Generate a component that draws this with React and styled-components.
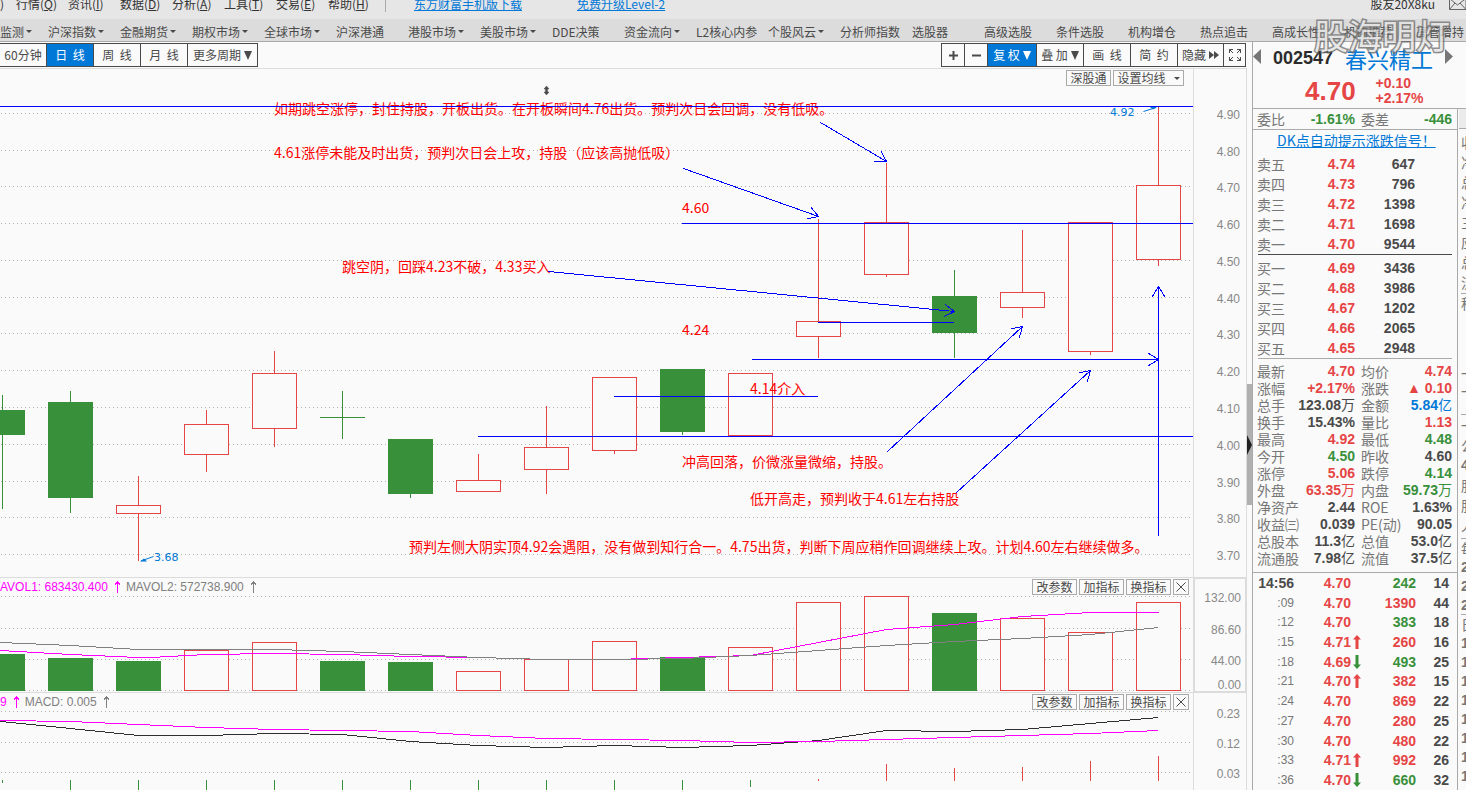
import React from "react";
import styled, { createGlobalStyle } from "styled-components";

const CJK = '"Noto Sans CJK SC", sans-serif';
const NUM = '"Liberation Sans", "Noto Sans CJK SC", sans-serif';
const C = {
  bg: "#fafafa",
  red: "#e64545",
  green: "#38903a",
  blue: "#0078d7",
  dark: "#4a4a4a",
  label: "#777777",
  grid: "#dcdcdc",
  line: "#aaaaaa",
  draw: "#0000ff",
  note: "#ff0000",
  magenta: "#ff00ff",
};

const Global = createGlobalStyle`
  *, *::before, *::after { box-sizing: border-box; }
  body { margin: 0; background: ${C.bg}; overflow: hidden; }
  button { margin: 0; padding: 0; border: 0; background: none; color: inherit; font: inherit; white-space: nowrap; }
`;

const Page = styled.div`
  display: flex;
  flex-direction: column;
  height: 100vh;
  overflow: hidden;
  font: 12px/16px ${CJK};
  color: ${C.dark};
`;

/* ---------- top bars ---------- */
const MenuBar = styled.header`
  display: flex;
  align-items: flex-end;
  flex: none;
  height: 19px;
  padding-bottom: 7px;
  overflow: hidden;
  background: #e6e6e6;
  color: #333;
  white-space: nowrap;
`;
const MenuStub = styled.span`
  width: 16px;
`;
const MenuItem = styled.button`
  width: 52px;
  text-align: left;
`;
const MenuDivider = styled.span`
  width: 1px;
  height: 14px;
  margin: 0 28px 0 5px;
  background: ${C.line};
`;
const TopLink = styled.a`
  width: 163px;
  color: ${C.blue};
`;
const User = styled.div`
  display: flex;
  align-items: center;
  gap: 14px;
  margin-left: auto;
`;
const NavBar = styled.nav`
  display: flex;
  align-items: center;
  flex: none;
  height: 23px;
  padding-top: 3px;
  overflow: hidden;
  background: #dcdcdc;
  border-bottom: 1px solid ${C.line};
`;
const NavItem = styled.button`
  display: flex;
  align-items: center;
  flex: none;
  gap: 2px;
  width: ${(p) => (p.$first ? 48 : 72)}px;
`;
const Caret = styled.span`
  border: 3px solid transparent;
  border-top-color: currentColor;
  border-bottom: 0;
`;

/* ---------- layout ---------- */
const Body = styled.main`
  display: flex;
  flex: 1;
  min-height: 0;
`;
const ChartColumn = styled.section`
  display: flex;
  flex-direction: column;
  flex: 1;
  min-width: 0;
`;
const Toolbar = styled.div`
  display: flex;
  justify-content: space-between;
  flex: none;
  height: 27px;
  padding: 1px 1px 0 0;
  border-bottom: 1px solid ${C.grid};
`;
const Group = styled.div`
  display: flex;
  height: 24px;
  border: 1px solid ${C.dark};
  border-left-width: ${(p) => (p.$open ? 0 : 1)}px;
`;
const Tool = styled.button`
  display: flex;
  align-items: center;
  justify-content: center;
  gap: 3px;
  width: ${(p) => p.$w}px;
  border-left: ${(p) => (p.$edge ? 0 : 1)}px solid ${C.dark};
  background: ${(p) => (p.$on ? C.blue : C.bg)};
  color: ${(p) => (p.$on ? "#fff" : C.dark)};
`;
const Panel = styled.div`
  display: flex;
  position: relative;
  flex: ${(p) => (p.$grow ? "1 1 0" : "none")};
  height: ${(p) => p.$h}px;
  overflow: hidden;
  border-top: ${(p) => (p.$line ? 1 : 0)}px solid ${C.grid};
`;
const Plot = styled.div`
  display: flex;
  justify-content: flex-end;
  flex: 1;
  min-width: 0;
  overflow: hidden;
  svg { flex: none; display: block; }
`;
const Axis = styled.div`
  flex: none;
  width: 54px;
  border: solid ${C.grid};
  border-width: ${(p) => (p.$boxed ? "1px 2px 1px 2px" : "0 1px")};
  overflow: hidden;
  svg { display: block; }
`;
const Tags = styled.div`
  position: absolute;
  top: 1px;
  right: ${(p) => p.$right}px;
  display: flex;
  gap: 2px;
`;
const Tag = styled.button`
  display: flex;
  align-items: center;
  justify-content: center;
  gap: 8px;
  width: ${(p) => p.$w}px;
  height: 16px;
  border: 1px solid ${C.line};
  background: ${C.bg};
  line-height: 14px;
`;
const Legend = styled.div`
  position: absolute;
  top: 1px;
  left: 0;
  display: flex;
  align-items: center;
  font: 12px/16px ${NUM};
  gap: 5px;
`;
const LegendItem = styled.span`
  display: flex;
  align-items: center;
  gap: 6px;
  color: ${(p) => p.$c};
`;
const Splitter = styled.div`
  display: flex;
  align-items: center;
  flex: none;
  width: 5px;
  margin: 342px 0 0;
  height: 121px;
  background: #b0b0b0;
  overflow: hidden;
`;

/* ---------- quote panel ---------- */
const Quote = styled.aside`
  display: flex;
  flex-direction: column;
  flex: none;
  width: 205px;
  border-left: 1px solid ${C.line};
`;
const NameRow = styled.div`
  display: flex;
  align-items: center;
  justify-content: space-between;
  flex: none;
  height: 32px;
  padding: 0 4px 0 0;
`;
const Code = styled.strong`
  font: bold 18px/24px ${NUM};
  color: #2b2b2b;
`;
const StockName = styled.span`
  font-size: 22px;
  line-height: 30px;
  color: ${C.blue};
`;
const PriceRow = styled.div`
  display: flex;
  align-items: center;
  gap: 20px;
  flex: none;
  height: 35px;
  padding-left: 52px;
  border-bottom: 1px solid ${C.line};
  font-family: ${NUM};
  font-weight: bold;
  color: ${C.red};
`;
const Last = styled.span`
  font-size: 26px;
  line-height: 32px;
`;
const Change = styled.span`
  font-size: 14px;
  line-height: 15px;
`;
const Promo = styled.a`
  flex: none;
  height: 24px;
  padding-left: 24px;
  font-size: 14px;
  line-height: 21px;
  color: ${C.blue};
  white-space: nowrap;
`;
const Table = styled.table`
  width: 204px;
  table-layout: fixed;
  border-collapse: collapse;
  font: 14px/16px ${NUM};
  white-space: nowrap;
  height: ${(p) => (p.$fill ? "100%" : "auto")};
  tr { height: ${(p) => (p.$fill ? "auto" : p.$row + "px")}; }
  th, td { padding: 0; }
`;
const Name = styled.th`
  padding-left: ${(p) => p.$pad}px !important;
  font: 14px/16px ${CJK};
  text-align: left;
  color: ${C.label};
`;
const Value = styled.td`
  text-align: right;
  font-weight: bold;
  color: ${(p) => p.$c || C.dark};
`;
const Unit = styled.span`
  font-weight: normal;
`;
const Time = styled.th`
  text-align: right;
  font: ${(p) => (p.$full ? "bold 14px/16px" : "12px/16px")} ${NUM};
  color: ${(p) => (p.$full ? C.dark : C.label)};
`;
const Rule = styled.hr`
  flex: none;
  width: 194px;
  height: 1px;
  margin: 0 5px 3px;
  border: 0;
  background: ${(p) => p.$c};
`;
const Boxed = styled.div`
  flex: none;
  padding-bottom: ${(p) => p.$pb || 0}px;
  border-bottom: 1px solid ${C.line};
`;
const Ticks = styled.div`
  flex: 1;
  min-height: 0;
`;

/* ---------- clipped neighbour panel ---------- */
const Side = styled.aside`
  flex: none;
  width: 9px;
  margin-top: 66px;
  overflow: hidden;
  border-left: 1px solid ${C.line};
  border-top: 1px solid ${C.line};
  font: 14px/20px ${CJK};
  color: ${C.label};
  white-space: nowrap;
`;
const SideHead = styled.div`
  height: 20px;
  margin: 0 0 3px 1px;
  background: #ebebeb;
  border-bottom: 1px solid ${C.line};
`;
const SideBlock = styled.div`
  height: ${(p) => p.$h}px;
  margin-left: 3px;
  line-height: ${(p) => p.$lh}px;
  border-bottom: 1px solid ${C.line};
`;
const SideText = styled.div`
  padding-top: ${(p) => p.$gap || 0}px;
  font-weight: ${(p) => (p.$b ? "bold" : "normal")};
  font-family: ${(p) => (p.$b ? NUM : CJK)};
`;

const Watermark = styled.div`
  position: absolute;
  top: 14px;
  right: 16px;
  font: 34px/42px ${CJK};
  color: #e4e4e4;
  -webkit-text-stroke: 3px #707070;
  paint-order: stroke fill;
  opacity: 0.75;
  text-shadow: 1px 1px 2px rgba(0, 0, 0, 0.2);
  pointer-events: none;
`;

/* ---------- data ---------- */
const MENU = [["行情", "Q"], ["资讯", "I"], ["数据", "D"], ["分析", "A"], ["工具", "T"], ["交易", "E"], ["帮助", "H"]];
const NAV = [
  ["监测", 1], ["沪深指数", 1], ["金融期货", 1], ["期权市场", 1], ["全球市场", 1], ["沪深港通", 0],
  ["港股市场", 1], ["美股市场", 1], ["DDE决策", 0], ["资金流向", 1], ["L2核心内参", 0], ["个股风云", 1],
  ["分析师指数", 0], ["选股器", 0], ["高级选股", 0], ["条件选股", 0], ["机构增仓", 0], ["热点追击", 0],
  ["高成长性", 0], ["机构推荐", 0], ["高管增持", 0],
];
/* centre, body top, body bottom, wick top, wick bottom, up?, volume top */
const CANDLES = [
  [2, 410, 435, 395, 509, 0, 654], [70, 402, 498, 391, 513, 0, 658], [138, 505, 514, 476, 561, 1, 661, 0],
  [206, 424, 455, 410, 472, 1, 650], [274, 373, 429, 351, 447, 1, 642], [342, 417, 418, 391, 439, 0, 661],
  [410, 439, 494, 439, 498, 0, 662], [478, 480, 492, 454, 492, 1, 671], [546, 447, 470, 406, 494, 1, 659],
  [614, 377, 451, 377, 454, 1, 641], [682, 369, 432, 369, 435, 0, 657], [750, 373, 436, 373, 436, 1, 647],
  [818, 321, 337, 219, 358, 1, 602], [886, 222, 275, 163, 277, 1, 596], [954, 296, 333, 270, 358, 0, 613],
  [1022, 292, 308, 230, 318, 1, 618], [1090, 222, 352, 222, 355, 1, 632], [1158, 185, 260, 107, 266, 1, 602],
];
const PRICE_GRID = [113, 150, 186, 223, 260, 297, 333, 370, 407, 444, 481, 517, 554];
const NOTES = [
  [274, 114, "如期跳空涨停，封住持股，开板出货。在开板瞬间4.76出货。预判次日会回调，没有低吸。"],
  [274, 158, "4.61涨停未能及时出货，预判次日会上攻，持股（应该高抛低吸）"],
  [682, 213, "4.60"],
  [342, 272, "跳空阴，回踩4.23不破，4.33买入"],
  [682, 335, "4.24"],
  [750, 394, "4.14介入"],
  [682, 467, "冲高回落，价微涨量微缩，持股。"],
  [750, 504, "低开高走，预判收于4.61左右持股"],
  [409, 552, "预判左侧大阴实顶4.92会遇阻，没有做到知行合一。4.75出货，判断下周应稍作回调继续上攻。计划4.60左右继续做多。"],
];
const LEVELS = [[0, 1193, 106], [682, 1193, 223], [818, 954, 322], [614, 818, 396], [478, 1193, 436]];
const ARROWS = [
  [820, 122, 886, 161], [683, 168, 818, 216], [548, 271, 954, 311], [751, 359, 1158, 359],
  [887, 451, 1022, 326], [956, 492, 1090, 370], [1158, 535, 1158, 286],
];
const MA1 = "0,650 70,654 138,657 150,657 206,654 274,653 342,654 410,656 478,657 546,659 614,659 682,657 750,655 818,642 886,629 954,624 1022,616 1090,612 1158,612";
const MA2 = "0,642 70,645 138,649 274,649 342,651 410,654 478,657 546,659 614,659 682,658 750,655 818,650 886,645 954,641 1022,638 1090,634 1158,627";
const DIF = "0,721 70,728 138,735 206,735 274,733 342,734 410,741 478,745 546,747 614,745 682,747 750,745 818,740 886,730 954,731 1022,729 1090,723 1158,717";
const DEA = "0,720 70,721 138,724 206,727 274,729 342,730 410,731 478,735 546,738 614,739 682,740 750,742 818,741 886,739 954,737 1022,735 1090,733 1158,730";
const STICKS = [
  [2, 780, 783, 0], ...[70, 138, 206, 274, 342, 410, 478, 546, 614, 682].map((x) => [x, 780, 792, 0]),
  [750, 780, 787, 0], [818, 779, 781, 1], [886, 764, 781, 1], [954, 768, 781, 1], [1022, 767, 781, 1],
  [1090, 761, 781, 1], [1158, 756, 781, 1],
];
const ASKS = [["卖五", "4.74", "647"], ["卖四", "4.73", "796"], ["卖三", "4.72", "1398"], ["卖二", "4.71", "1698"], ["卖一", "4.70", "9544"]];
const BIDS = [["买一", "4.69", "3436"], ["买二", "4.68", "3986"], ["买三", "4.67", "1202"], ["买四", "4.66", "2065"], ["买五", "4.65", "2948"]];
const R = C.red, G = C.green, K = C.dark;
const DETAILS = [
  ["最新", "4.70", R, "均价", "4.74", R], ["涨幅", "+2.17%", R, "涨跌", "▲ 0.10", R],
  ["总手", "123.08万", K, "金额", "5.84亿", C.blue], ["换手", "15.43%", K, "量比", "1.13", R],
  ["最高", "4.92", R, "最低", "4.48", G], ["今开", "4.50", G, "昨收", "4.60", K],
  ["涨停", "5.06", R, "跌停", "4.14", G], ["外盘", "63.35万", R, "内盘", "59.73万", G],
  ["净资产", "2.44", K, "ROE", "1.63%", K], ["收益㈢", "0.039", K, "PE(动)", "90.05", K],
  ["总股本", "11.3亿", K, "总值", "53.0亿", K], ["流通股", "7.98亿", K, "流值", "37.5亿", K],
];
const TICKS = [
  ["14:56", "4.70", 0, "242", G, "14"], [":09", "4.70", 0, "1390", R, "44"], [":12", "4.70", 0, "383", G, "18"],
  [":15", "4.71", 1, "260", R, "16"], [":18", "4.69", -1, "493", G, "25"], [":21", "4.70", 1, "382", R, "15"],
  [":24", "4.70", 0, "869", R, "22"], [":27", "4.70", 0, "280", R, "25"], [":30", "4.70", 0, "480", R, "22"],
  [":33", "4.71", 1, "992", R, "26"], [":36", "4.70", -1, "660", G, "32"],
];

/* ---------- drawing parts ---------- */
const Grid = ({ rows }) => rows.map((y) => (
  <line key={y} x1="1" x2="1193" y1={y + 0.5} y2={y + 0.5} stroke="#b4b4b4" strokeDasharray="1 3" shapeRendering="crispEdges" />
));
const Bar = ({ x, top, bottom, up }) => up
  ? <rect x={x - 21.5} y={top + 0.5} width="44" height={bottom - top - 1} fill={C.bg} stroke={C.red} />
  : <rect x={x - 22} y={top} width="45" height={bottom - top} fill={C.green} />;

function Arrow({ x1, y1, x2, y2 }) {
  const a = Math.atan2(y2 - y1, x2 - x1);
  const tip = (s) => `${x2 - 12 * Math.cos(a + s)},${y2 - 12 * Math.sin(a + s)}`;
  return (
    <g transform="translate(.5 .5)" fill="none" stroke={C.draw} shapeRendering="crispEdges">
      <line x1={x1} y1={y1} x2={x2} y2={y2} />
      <polyline points={`${tip(0.55)} ${x2},${y2} ${tip(-0.55)}`} />
    </g>
  );
}
const Trace = ({ points, color }) => (
  <polyline points={points} transform="translate(.5 .5)" fill="none" stroke={color} shapeRendering="crispEdges" />
);
const AxisLabels = ({ top, height, labels }) => (
  <svg width="50" height={height} viewBox={`0 ${top} 50 ${height}`} fontFamily="Liberation Sans, sans-serif" fontSize="12" fill="#888" textAnchor="end">
    {labels.map(([y, t]) => <text key={t} x="46" y={y + 5}>{t}</text>)}
  </svg>
);
const UpArrow = () => (
  <svg width="7" height="12" viewBox="0 0 7 12" fill="none" stroke="currentColor" shapeRendering="crispEdges" aria-hidden="true">
    <path d="M3.5 0V12M.5 4.5 3.5 .5 6.5 4.5" />
  </svg>
);
const TickIcon = styled.svg`
  display: block;
  margin-left: 2px;
`;
const TickArrow = ({ dir }) => (
  <TickIcon width="8" height="14" viewBox="0 0 8 14" fill={dir > 0 ? C.red : C.green} aria-hidden="true">
    <path d={dir > 0 ? "M4 0 8 4.500H5.500V14H2.500V4.500H0Z" : "M4 14 8 9.500H5.500V0H2.500V9.500H0Z"} />
  </TickIcon>
);
const Down = () => (
  <svg width="8" height="9" viewBox="0 0 8 9" fill="currentColor" aria-hidden="true"><path d="M0 0H8L4 9Z" /></svg>
);
const Cross = () => (
  <svg width="10" height="10" viewBox="0 0 10 10" fill="none" stroke="currentColor" aria-hidden="true"><path d="M.5 .5 9.5 9.5M9.5 .5 .5 9.5" /></svg>
);
const SideArrow = ({ right }) => (
  <svg width="8" height="15" viewBox="0 0 8 15" fill="#777" aria-hidden="true"><path d={right ? "M0 0V15L8 7.5Z" : "M8 0V15L0 7.5Z"} /></svg>
);

const IndicatorTags = () => (
  <Tags $right={58}>
    <Tag $w={45}>改参数</Tag>
    <Tag $w={45}>加指标</Tag>
    <Tag $w={45}>换指标</Tag>
    <Tag $w={16} aria-label="关闭"><Cross /></Tag>
  </Tags>
);

const Amount = ({ text }) => {
  const unit = /[万亿]$/.test(text) ? text.slice(-1) : "";
  return <>{unit ? text.slice(0, -1) : text}{unit && <Unit>{unit}</Unit>}</>;
};
const PairTable = ({ rows, row }) => (
  <Table $row={row}>
    <colgroup><col width="41" /><col width="61" /><col width="43" /><col width="54" /><col width="5" /></colgroup>
    <tbody>
      {rows.map(([a, av, ac, b, bv, bc]) => (
        <tr key={a}>
          <Name scope="row" $pad={4}>{a}</Name><Value $c={ac}><Amount text={av} /></Value>
          <Name scope="row" $pad={6}>{b}</Name><Value $c={bc}><Amount text={bv} /></Value><td />
        </tr>
      ))}
    </tbody>
  </Table>
);
const DepthTable = ({ rows }) => (
  <Table $row={20}>
    <colgroup><col width="46" /><col width="56" /><col width="60" /><col width="42" /></colgroup>
    <tbody>
      {rows.map(([n, p, v]) => (
        <tr key={n}><Name scope="row" $pad={4}>{n}</Name><Value $c={C.red}>{p}</Value><Value>{v}</Value><td /></tr>
      ))}
    </tbody>
  </Table>
);

export default function App() {
  return (
    <Page>
      <Global />
      <MenuBar>
        <MenuStub>)</MenuStub>
        {MENU.map(([t, k]) => <MenuItem key={k}>{t}(<u>{k}</u>)</MenuItem>)}
        <MenuDivider />
        <TopLink href="#mobile">东方财富手机版下载</TopLink>
        <TopLink href="#level2">免费升级Level-2</TopLink>
        <User>
          <span>股友20X8ku</span>
          <svg width="17" height="12" viewBox="0 0 17 12" fill="none" stroke="#666" aria-hidden="true">
            <path d="M.5 .5H17V11.5H.5ZM.5 .5 8.5 7 17 .5M.5 11.5 6 5M17 11.5 11 5" />
          </svg>
        </User>
      </MenuBar>
      <NavBar>
        {NAV.map(([t, c], i) => <NavItem key={t} $first={i === 0}>{t}{c ? <Caret /> : null}</NavItem>)}
      </NavBar>
      <Body>
        <ChartColumn>
          <Toolbar>
            <Group $open>
              <Tool $w={46} $edge>60分钟</Tool>
              <Tool $w={47} $on>日&nbsp; 线</Tool>
              <Tool $w={47}>周&nbsp; 线</Tool>
              <Tool $w={47}>月&nbsp; 线</Tool>
              <Tool $w={70}>更多周期<Down /></Tool>
            </Group>
            <Group>
              <Tool $w={22} $edge aria-label="放大">
                <svg width="9" height="9" viewBox="0 0 9 9" stroke={C.dark} strokeWidth="2" aria-hidden="true"><path d="M4.5 0V9M0 4.5H9" /></svg>
              </Tool>
              <Tool $w={23} aria-label="缩小">
                <svg width="9" height="9" viewBox="0 0 9 9" stroke={C.dark} strokeWidth="2" aria-hidden="true"><path d="M0 4.5H9" /></svg>
              </Tool>
              <Tool $w={49} $on>复 权 <Down /></Tool>
              <Tool $w={47}>叠 加<Down /></Tool>
              <Tool $w={47}>画&nbsp; 线</Tool>
              <Tool $w={47}>简&nbsp; 约</Tool>
              <Tool $w={46}>隐藏
                <svg width="10" height="8" viewBox="0 0 10 8" fill={C.dark} aria-hidden="true"><path d="M0 0 5 4 0 8ZM5 0 10 4 5 8Z" /></svg>
              </Tool>
              <Tool $w={22} aria-label="全屏">
                <svg width="12" height="12" viewBox="0 0 12 12" fill="none" stroke={C.dark} aria-hidden="true">
                  <path d="M.5 4V.5H4M8 .5H11.5V4M11.5 8V11.5H8M4 11.5H.5V8M.5 .5 4 4M11.5 .5 8 4M.5 11.5 4 8M11.5 11.5 8 8" />
                </svg>
              </Tool>
            </Group>
          </Toolbar>

          <Panel $h={508}>
            <Plot>
              <svg width="1193" height="508" viewBox="0 69 1193 508" role="img" aria-label="日K线图">
                <Grid rows={PRICE_GRID} />
                {CANDLES.map(([x, t, b, wt, wb, up]) => (
                  <g key={x}>
                    <rect x={x} y={wt} width="1" height={wb - wt} fill={up ? C.red : C.green} />
                    <Bar x={x} top={t} bottom={b} up={up} />
                  </g>
                ))}
                <g fontFamily='"Noto Sans CJK SC", sans-serif' fontSize="14" fill={C.note}>
                  {NOTES.map(([x, y, t]) => <text key={t} x={x} y={y}>{t}</text>)}
                </g>
                {LEVELS.map(([a, b, y]) => <rect key={y} x={a} y={y} width={b - a} height="1" fill={C.draw} />)}
                {ARROWS.map(([a, b, c, d]) => <Arrow key={a} x1={a} y1={b} x2={c} y2={d} />)}
                <g fontFamily="DejaVu Sans, sans-serif" fontSize="11" fill={C.blue}>
                  <text x="1110" y="116">4.92</text>
                  <text x="154" y="561">3.68</text>
                </g>
                <g stroke={C.blue} fill={C.blue}>
                  <path d="M1143.5 111.5 1156 107.5" />
                  <path d="M1157 107 1150 107 1153 109.5Z" stroke="none" />
                  <path d="M153.5 556.5 141 561" />
                  <path d="M140 561.5 147 561.5 144 558.5Z" stroke="none" />
                </g>
                <path d="M546.5 86 549 89H547.5V92H549L546.5 95 544 92H545.5V89H544Z" fill={C.dark} stroke={C.dark} strokeWidth="0.5" />
              </svg>
            </Plot>
            <Axis>
              <AxisLabels top={69} height={508} labels={PRICE_GRID.map((y, i) => [y + 1, (4.9 - i * 0.1).toFixed(2)])} />
            </Axis>
            <Tags $right={63}>
              <Tag $w={45}>深股通</Tag>
              <Tag $w={71}>设置均线<Caret /></Tag>
            </Tags>
          </Panel>

          <Panel $h={115} $line>
            <Plot>
              <svg width="1193" height="114" viewBox="0 578 1193 114" role="img" aria-label="成交量">
                <Grid rows={[596, 628, 659, 690]} />
                {CANDLES.map(([x, , , , , up, v, vup = up]) => <Bar key={x} x={x} top={v} bottom={691} up={vup} />)}
                <Trace points={MA1} color={C.magenta} />
                <Trace points={MA2} color="#808080" />
              </svg>
            </Plot>
            <Axis $boxed>
              <AxisLabels top={579} height={112} labels={[[597, "132.00"], [629, "86.60"], [660, "44.00"], [684, "0.00"]]} />
            </Axis>
            <Legend>
              <LegendItem $c={C.magenta}>AVOL1: 683430.400<UpArrow /></LegendItem>
              <LegendItem $c="#808080">MAVOL2: 572738.900<UpArrow /></LegendItem>
            </Legend>
            <IndicatorTags />
          </Panel>

          <Panel $h={98} $line $grow>
            <Plot>
              <svg width="1193" height="100" viewBox="0 693 1193 100" role="img" aria-label="MACD">
                <Grid rows={[711, 742, 772]} />
                {STICKS.map(([x, a, b, up]) => <rect key={x} x={x} y={a} width="1" height={b - a} fill={up ? C.red : C.green} />)}
                <Trace points={DIF} color="#303030" />
                <Trace points={DEA} color={C.magenta} />
              </svg>
            </Plot>
            <Axis>
              <AxisLabels top={693} height={97} labels={[[713, "0.23"], [743, "0.12"], [773, "0.03"]]} />
            </Axis>
            <Legend>
              <LegendItem $c={C.magenta}>9<UpArrow /></LegendItem>
              <LegendItem $c="#808080">MACD: 0.005<UpArrow /></LegendItem>
            </Legend>
            <IndicatorTags />
          </Panel>
        </ChartColumn>

        <Splitter>
          <svg width="5" height="20" viewBox="0 0 5 20" fill="#222" aria-hidden="true"><path d="M0 0 5 10 0 20Z" /></svg>
        </Splitter>

        <Quote>
          <NameRow>
            <button aria-label="上一只"><SideArrow /></button>
            <Code>002547</Code>
            <StockName>春兴精工</StockName>
            <button aria-label="下一只"><SideArrow right /></button>
          </NameRow>
          <PriceRow>
            <Last>4.70</Last>
            <Change>+0.10<br />+2.17%</Change>
          </PriceRow>
          <Boxed><PairTable row={20} rows={[["委比", "-1.61%", G, "委差", "-446", G]]} /></Boxed>
          <Promo href="#dk">DK点自动提示涨跌信号！</Promo>
          <DepthTable rows={ASKS} />
          <Rule $c={C.dark} />
          <DepthTable rows={BIDS} />
          <Rule $c={C.line} />
          <Boxed $pb={6}><PairTable row={17} rows={DETAILS} /></Boxed>
          <Ticks>
            <Table $fill>
              <colgroup><col width="41" /><col width="57" /><col width="11" /><col width="54" /><col width="33" /><col width="8" /></colgroup>
              <tbody>
                {TICKS.map(([t, p, dir, v, vc, n], i) => (
                  <tr key={t}>
                    <Time scope="row" $full={i === 0}>{t}</Time>
                    <Value $c={C.red}>{p}</Value>
                    <td>{dir ? <TickArrow dir={dir} /> : null}</td>
                    <Value $c={vc}>{v}</Value>
                    <Value>{n}</Value>
                    <td />
                  </tr>
                ))}
              </tbody>
            </Table>
          </Ticks>
        </Quote>

        <Side>
          <SideHead />
          <SideBlock $h={162} $lh={20}>
            {["收", "净", "总", "净", "三", "应", "总", "流"].map((t, i) => <SideText key={i}>{t}</SideText>)}
          </SideBlock>
          <SideBlock $h={121} $lh={18}>
            <SideText>种</SideText>
            <SideText $gap={52}>一</SideText>
            <SideText>一</SideText>
          </SideBlock>
          <SideBlock $h={124} $lh={20}>
            <SideText>一</SideText>
            <SideText>公</SideText>
            <SideText $b>4</SideText>
            <SideText>股</SideText>
            <SideText>股</SideText>
            <SideText>人</SideText>
          </SideBlock>
          <SideBlock $h={76} $lh={19}>
            <SideText>每</SideText>
            {[1, 2, 3].map((i) => <SideText key={i} $b>2</SideText>)}
          </SideBlock>
          <SideBlock $h={180} $lh={19}>
            <SideText>日</SideText>
            {[1, 2, 3, 4, 5, 6, 7, 8].map((i) => <SideText key={i} $b>1</SideText>)}
          </SideBlock>
        </Side>
      </Body>
      <Watermark aria-hidden="true">股海明灯</Watermark>
    </Page>
  );
}
